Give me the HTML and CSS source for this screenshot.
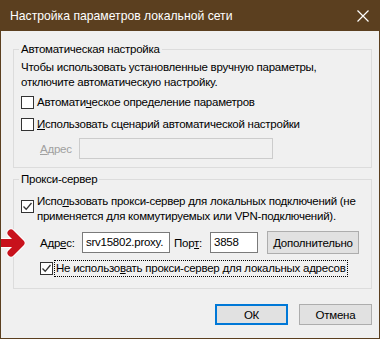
FILE: index.html
```html
<!DOCTYPE html>
<html lang="ru">
<head>
  <meta charset="UTF-8" />
  <title>Настройка параметров локальной сети</title>
  <link rel="stylesheet" href="styles.css">
</head>
<body>
  <div class="window">
    <div class="titlebar">
      <span class="title">Настройка параметров локальной сети</span>
      <svg class="close" width="12" height="12" viewBox="0 0 12 12">
        <path d="M0.5 0.5 L11.5 11.5 M11.5 0.5 L0.5 11.5" stroke="#fff" stroke-width="1.2" fill="none"/>
      </svg>
    </div>

    <div class="content">
      <fieldset class="group group-auto">
        <legend>Автоматическая настройка</legend>
        <p class="note">Чтобы использовать установленные вручную параметры,<br>отключите автоматическую настройку.</p>
        <div class="check first">
          <span class="box"></span>
          <span>Автомати<u>ч</u>еское определение параметров</span>
        </div>
        <div class="check second">
          <span class="box"></span>
          <span><u>И</u>спользовать сценарий автоматической настройки</span>
        </div>
        <div class="row addr-row">
          <span class="lbl lbl-disabled"><u>А</u>дрес</span>
          <span class="field field-disabled"></span>
        </div>
      </fieldset>

      <fieldset class="group group-proxy">
        <legend>Прокси-сервер</legend>
        <div class="check multi">
          <span class="box checked"><svg width="11" height="11" viewBox="0 0 11 11"><path d="M1.5 5.5 L4.2 8.3 L9.5 2" stroke="#333" stroke-width="1.3" fill="none"/></svg></span>
          <span>Испо<u>л</u>ьзовать прокси-сервер для локальных подключений (не<br>применяется для коммутируемых или VPN-подключений).</span>
        </div>
        <div class="row proxy-row">
          <span class="lbl lbl-addr">Адр<u>е</u>с:</span>
          <span class="field field-addr">srv15802.proxy.</span>
          <span class="lbl lbl-port">Пор<u>т</u>:</span>
          <span class="field field-port">3858</span>
          <span class="btn btn-more"><u>Д</u>ополнительно</span>
        </div>
        <div class="check bypass">
          <span class="box checked"><svg width="11" height="11" viewBox="0 0 11 11"><path d="M1.5 5.5 L4.2 8.3 L9.5 2" stroke="#333" stroke-width="1.3" fill="none"/></svg></span>
          <span class="focus">Не использо<u>в</u>ать прокси-сервер для локальных адресов</span>
        </div>
      </fieldset>

      <div class="actions">
        <span class="btn btn-ok">ОК</span>
        <span class="btn">Отмена</span>
      </div>
    </div>

    <!-- указатель на поле адреса -->
    <svg class="arrow" width="28" height="30" viewBox="0 0 28 30">
      <g fill="none" stroke="#fff" stroke-linecap="round" stroke-linejoin="round">
        <path d="M-2 15 L17 15" stroke-width="10"/>
        <path d="M10 5 L20 15 L10 25" stroke-width="9"/>
      </g>
      <g fill="none" stroke="#c8121c" stroke-linecap="round" stroke-linejoin="round">
        <path d="M-2 15 L17 15" stroke-width="8"/>
        <path d="M10 5 L20 15 L10 25" stroke-width="7"/>
      </g>
    </svg>
  </div>
</body>
</html>
```

FILE: styles.css
```css
:root {
  --frame: #5b3f1f;
  --face: #f0f0f0;
  --group-line: #dcdcdc;
  --field-line: #7a7a7a;
  --btn-face: #e1e1e1;
  --btn-line: #adadad;
  --accent: #0078d7;
}

html, body {
  margin: 0;
  padding: 0;
}
body {
  font-family: "Liberation Sans", Arial, sans-serif;
  font-size: 11.5px;
  letter-spacing: -0.25px;
  color: #000;
}

.window {
  position: relative;
  width: 380px;
  height: 339px;
  box-sizing: border-box;
  background: var(--face);
  border: 1px solid var(--frame);
  border-top: 0;
  white-space: nowrap;
}

.titlebar {
  height: 31px;
  background: var(--frame);
  color: #fff;
  font-size: 12.2px;
  letter-spacing: 0;
  display: flex;
  align-items: center;
  justify-content: space-between;
  padding: 0 10px 0 9px;
}
.close { margin-top: 1px; }

.content {
  padding: 11px 7px 0 12px;
}

.group {
  margin: 0;
  padding: 3px 8px 8px 7px;
  border: 1px solid var(--group-line);
  min-width: 0;
}
.group legend {
  padding: 0 2px;
  margin-left: -2px;
  line-height: 15px;
}
.group-proxy {
  margin-top: 4px;
  padding: 7px 8px 12px 7px;
}

.note {
  margin: 0;
  line-height: 15px;
}

.check {
  display: flex;
  align-items: center;
  gap: 3px;
  line-height: 15px;
}
.check.first { margin-top: 5px; }
.check.second { margin-top: 7px; }
.check.multi { align-items: flex-start; }
.check.multi .box { margin-top: 6px; }
.check.bypass { margin-top: 7px; padding-left: 19px; gap: 2px; }

.box {
  width: 13px;
  height: 13px;
  box-sizing: border-box;
  border: 1px solid #333;
  background: #fff;
  flex: none;
  display: flex;
  align-items: center;
  justify-content: center;
}

.focus {
  outline: 1px dotted #000;
  padding: 0 1px;
}

.row {
  display: flex;
  align-items: center;
}
.addr-row { margin-top: 6px; padding-left: 19px; }
.proxy-row { margin-top: 7px; padding-left: 19px; }

.lbl { flex: none; }
.lbl-disabled { width: 39px; color: #a0a0a0; }
.lbl-addr { width: 42px; }
.lbl-port { width: 36px; margin-left: 4px; }

.field {
  box-sizing: border-box;
  height: 21px;
  border: 1px solid var(--field-line);
  background: #fff;
  padding: 0 3px;
  line-height: 19px;
  overflow: hidden;
  flex: none;
}
.field-disabled {
  width: 194px;
  border-color: #cccccc;
  background: var(--face);
}
.field-addr { width: 88px; }
.field-port { width: 48px; }

.btn {
  box-sizing: border-box;
  width: 73px;
  height: 21px;
  border: 1px solid var(--btn-line);
  background: var(--btn-face);
  display: flex;
  align-items: center;
  justify-content: center;
  flex: none;
}
.btn-more {
  width: 92px;
  height: 23px;
  margin-left: 9px;
}
.btn-ok { border: 2px solid var(--accent); }

.actions {
  display: flex;
  justify-content: flex-end;
  gap: 11px;
  margin-top: 15px;
}

.arrow {
  position: absolute;
  left: 0;
  top: 228px;
}
```
